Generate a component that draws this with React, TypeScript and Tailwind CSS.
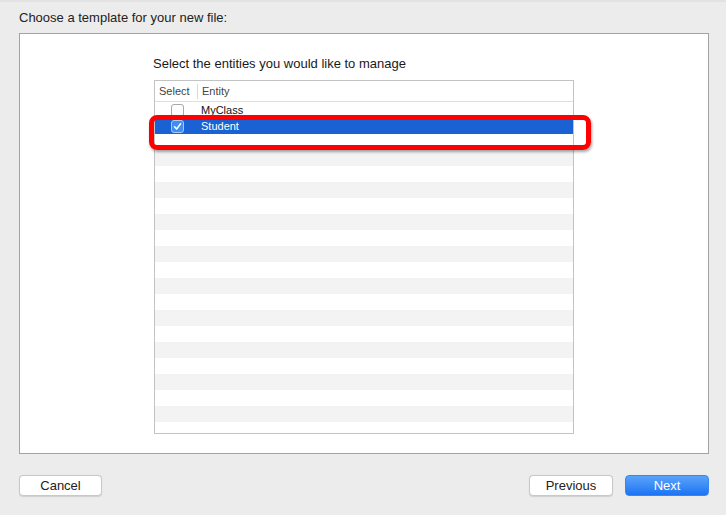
import React from "react";

const rows = Array.from({ length: 21 }, (_, i) => i);

function Check({ checked }: { checked: boolean }) {
  if (checked) {
    return (
      <div className="w-[13px] h-[13px] rounded-[3px] bg-[#3d8df5] border border-[#a9c9f7] flex items-center justify-center">
        <svg width="9" height="9" viewBox="0 0 9 9">
          <path d="M1.5 4.8 L3.6 7 L7.6 1.8" fill="none" stroke="#ffffff" strokeWidth="1.6" strokeLinecap="round" strokeLinejoin="round" />
        </svg>
      </div>
    );
  }
  return <div className="w-[13px] h-[13px] rounded-[3px] bg-white border border-[#a8a8a8] shadow-[0_0.5px_0.5px_rgba(0,0,0,0.1)]" />;
}

export default function App() {
  return (
    <div
      className="relative w-[726px] h-[515px] bg-[#ececec] flex flex-col overflow-hidden"
      style={{ fontFamily: '"Liberation Sans", Arial, sans-serif' }}
    >
      <div className="h-[2px] bg-[#e2e2e2]" />
      <div className="h-[31px] pl-[19px] pt-[8px] text-[13px] leading-[16px] text-[#222]">
        Choose a template for your new file:
      </div>
      <div className="ml-[19px] mr-[17px] h-[421px] bg-white border border-[#a3a3a3] flex flex-col items-start pl-[134px]">
        <div className="mt-[22px] text-[13px] leading-[16px] text-[#1a1a1a] ml-[-1px]">
          Select the entities you would like to manage
        </div>
        <div className="mt-[8px] w-[420px] h-[354px] border border-[#c3c3c3] overflow-hidden flex flex-col">
          <div className="h-[21px] shrink-0 flex items-center border-b border-[#e0e0e0] text-[11px] text-[#444]">
            <div className="w-[42px] pl-[4px]">Select</div>
            <div className="w-px h-[15px] bg-[#d8d8d8]" />
            <div className="pl-[4px]">Entity</div>
          </div>
          {rows.map((i) => {
            const selected = i === 1;
            const bg = selected ? "bg-[#1a62d3]" : i % 2 === 1 ? "bg-[#f3f3f3]" : "bg-white";
            return (
              <div key={i} className={`h-[16px] shrink-0 flex items-center ${bg}`}>
                {i < 2 && (
                  <>
                    <div className="w-[43px] flex justify-center pl-[1px]">
                      <Check checked={selected} />
                    </div>
                    <div className={`pl-[3px] text-[11px] ${selected ? "text-white" : "text-[#111]"}`}>
                      {i === 0 ? "MyClass" : "Student"}
                    </div>
                  </>
                )}
              </div>
            );
          })}
        </div>
      </div>
      <div className="flex items-center px-[17px] pl-[19px] mt-[21px]">
        <button className="w-[83px] h-[21px] rounded-[4px] bg-white border border-[#c8c8c8] shadow-[0_0.5px_1px_rgba(0,0,0,0.12)] text-[13px] text-[#222]">
          Cancel
        </button>
        <div className="flex-1" />
        <button className="w-[84px] h-[21px] rounded-[4px] bg-white border border-[#c8c8c8] shadow-[0_0.5px_1px_rgba(0,0,0,0.12)] text-[13px] text-[#222] mr-[12px]">
          Previous
        </button>
        <button className="w-[84px] h-[21px] rounded-[4px] bg-gradient-to-b from-[#5aa3fa] to-[#1b73f4] border border-[#3a86f0] text-[13px] text-white">
          Next
        </button>
      </div>
      <div className="absolute left-[149px] top-[115px] w-[442px] h-[35px] border-[5px] border-[#ff0000] rounded-[8px] shadow-[1px_2px_3px_rgba(0,0,0,0.35)]" />
    </div>
  );
}
